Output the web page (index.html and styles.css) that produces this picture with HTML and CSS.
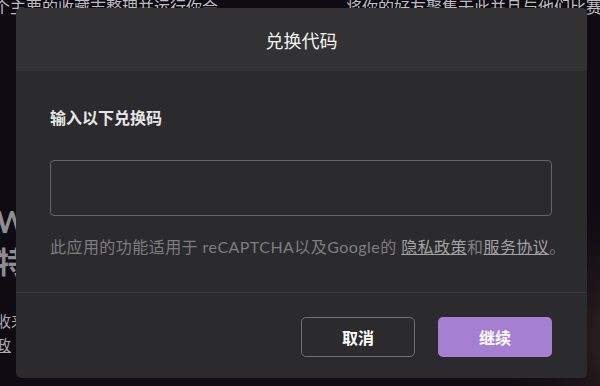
FILE: index.html
```html
<!DOCTYPE html>
<html lang="zh-CN">

<head>
    <meta charset="UTF-8">
    <meta name="viewport" content="width=device-width, initial-scale=1.0">
    <title>兑换代码</title>
    <link rel="stylesheet" href="styles.css">
</head>

<body>

    <div class="page">
        <div class="intro">
            <p class="left">个主要的收藏志整理并运行你会</p>
            <p class="right">将你的好友聚集于此并且与他们比赛</p>
        </div>
        <div class="hero">
            <h1>Wi</h1>
            <h1>特</h1>
            <p class="small">收来</p>
            <p class="small link">政</p>
        </div>
    </div>

    <div class="modal">
        <div class="modal-head">
            <h2>兑换代码</h2>
        </div>
        <div class="modal-body">
            <label for="code">输入以下兑换码</label>
            <input type="text" id="code">
            <p class="note">此应用的功能适用于 reCAPTCHA以及Google的 <a href="#">隐私政策</a>和<a href="#">服务协议</a>。</p>
        </div>
        <div class="modal-foot">
            <button class="cancel">取消</button>
            <button class="go">继续</button>
        </div>
    </div>

</body>

</html>
```

FILE: styles.css
```css
* {
    margin: 0;
    padding: 0;
    box-sizing: border-box;
}

body {
    width: 600px;
    height: 386px;
    overflow: hidden;
    background: radial-gradient(circle at 640px 340px, #3a2a26 0, #1c1418 70px, transparent 140px), #0e0b12;
    font-family: Lato, "Noto Sans CJK SC", sans-serif;
    color: #fff;
}

.page {
    height: 100%;
}

.intro {
    display: flex;
    justify-content: space-between;
    margin: -6px -6px 0 -6px;
    font-size: 16px;
    color: #bdbcc0;
}

.intro .right {
    width: 260px;
    white-space: nowrap;
}

.hero {
    margin-left: -4px;
    padding-top: 183px;
    color: #8e8d92;
}

.hero h1 {
    font-size: 30px;
    line-height: 40px;
}

.hero .small {
    font-size: 15px;
    line-height: 24px;
    color: #a9a8ad;
}

.hero .small:first-of-type {
    margin-top: 28px;
}

.hero .link {
    text-decoration: underline;
}

.modal {
    position: absolute;
    left: 16px;
    top: 8px;
    width: 571px;
    background: #2b2a2d;
    border-radius: 5px;
    overflow: hidden;
}

.modal-head {
    height: 63px;
    display: flex;
    align-items: center;
    justify-content: center;
    background: #323234;
}

.modal-head h2 {
    font-size: 18px;
    font-weight: normal;
    color: #f2f2f2;
}

.modal-body {
    padding: 36px 35px 34px 34px;
    display: flex;
    flex-direction: column;
    border-bottom: 1px solid #3a393c;
}

.modal-body label {
    font-size: 16px;
    line-height: 22px;
    font-weight: bold;
    color: #e6e6e6;
}

.modal-body input {
    margin-top: 31px;
    height: 56px;
    width: 100%;
    background: #2b2a2d;
    border: 1px solid #65636e;
    border-radius: 4px;
    outline: none;
    color: #fff;
    padding: 0 12px;
}

.note {
    margin-top: 20px;
    font-size: 16px;
    line-height: 22px;
    letter-spacing: 0.45px;
    color: #7e7d82;
    white-space: nowrap;
}

.note a {
    color: #a3a2a6;
}

.modal-foot {
    display: flex;
    justify-content: flex-end;
    gap: 23px;
    padding: 24px 35px 21px;
}

button {
    width: 114px;
    height: 40px;
    border-radius: 5px;
    font-family: Lato, "Noto Sans CJK SC", sans-serif;
    font-size: 16px;
    font-weight: bold;
    color: #fff;
    cursor: pointer;
}

.cancel {
    background: transparent;
    border: 1px solid #707070;
}

.go {
    background: #a57fd1;
    border: none;
}
```
